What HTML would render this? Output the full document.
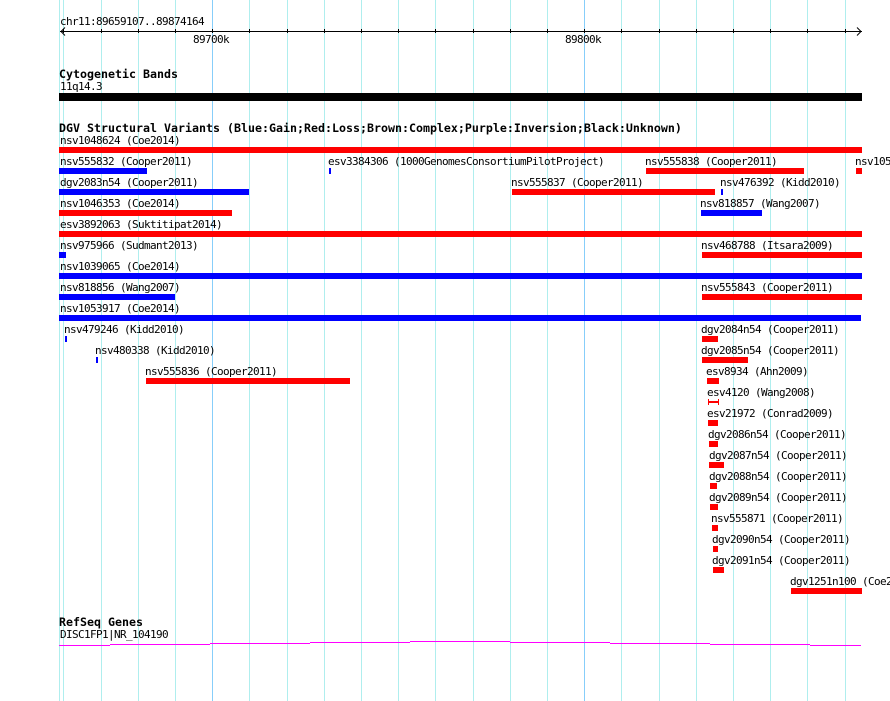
<!DOCTYPE html>
<html><head><meta charset="utf-8"><style>
html,body{margin:0;padding:0;background:#fff;width:890px;height:701px;overflow:hidden}
svg{display:block}
text{font-family:"DejaVu Sans Mono","Liberation Mono",monospace;font-size:11px;letter-spacing:-0.622px;fill:#000;white-space:pre}
text.b{font-weight:bold;font-size:11.63px;letter-spacing:0}
.g{fill:#afeeee}.d{fill:#87cefa}.r{fill:#f00}.u{fill:#00f}.m{fill:#f0f}.k{fill:#000}
</style></head><body>
<svg xmlns="http://www.w3.org/2000/svg" width="890" height="701" viewBox="0 0 890 701" shape-rendering="crispEdges">
<rect class="g" x="59" y="0" width="1" height="701"/><rect class="g" x="63" y="0" width="1" height="701"/><rect class="g" x="101" y="0" width="1" height="701"/><rect class="g" x="138" y="0" width="1" height="701"/><rect class="g" x="175" y="0" width="1" height="701"/><rect class="d" x="212" y="0" width="1" height="701"/><rect class="g" x="249" y="0" width="1" height="701"/><rect class="g" x="287" y="0" width="1" height="701"/><rect class="g" x="324" y="0" width="1" height="701"/><rect class="g" x="361" y="0" width="1" height="701"/><rect class="g" x="398" y="0" width="1" height="701"/><rect class="g" x="435" y="0" width="1" height="701"/><rect class="g" x="473" y="0" width="1" height="701"/><rect class="g" x="510" y="0" width="1" height="701"/><rect class="g" x="547" y="0" width="1" height="701"/><rect class="d" x="584" y="0" width="1" height="701"/><rect class="g" x="621" y="0" width="1" height="701"/><rect class="g" x="659" y="0" width="1" height="701"/><rect class="g" x="696" y="0" width="1" height="701"/><rect class="g" x="733" y="0" width="1" height="701"/><rect class="g" x="770" y="0" width="1" height="701"/><rect class="g" x="807" y="0" width="1" height="701"/><rect class="g" x="845" y="0" width="1" height="701"/>

<text x="60" y="25">chr11:89659107..89874164</text>
<rect class="k" x="60" y="31" width="802" height="1"/>
<path d="M65 27.5L61 31.5L65 35.5M857 27.5L861 31.5L857 35.5" fill="none" stroke="#000" stroke-width="1" shape-rendering="auto"/>
<rect class="k" x="63" y="29" width="1" height="4"/><rect class="k" x="101" y="29" width="1" height="4"/><rect class="k" x="138" y="29" width="1" height="4"/><rect class="k" x="175" y="29" width="1" height="4"/><rect class="k" x="212" y="29" width="1" height="4"/><rect class="k" x="249" y="29" width="1" height="4"/><rect class="k" x="287" y="29" width="1" height="4"/><rect class="k" x="324" y="29" width="1" height="4"/><rect class="k" x="361" y="29" width="1" height="4"/><rect class="k" x="398" y="29" width="1" height="4"/><rect class="k" x="435" y="29" width="1" height="4"/><rect class="k" x="473" y="29" width="1" height="4"/><rect class="k" x="510" y="29" width="1" height="4"/><rect class="k" x="547" y="29" width="1" height="4"/><rect class="k" x="584" y="29" width="1" height="4"/><rect class="k" x="621" y="29" width="1" height="4"/><rect class="k" x="659" y="29" width="1" height="4"/><rect class="k" x="696" y="29" width="1" height="4"/><rect class="k" x="733" y="29" width="1" height="4"/><rect class="k" x="770" y="29" width="1" height="4"/><rect class="k" x="807" y="29" width="1" height="4"/><rect class="k" x="845" y="29" width="1" height="4"/>
<text x="193" y="43">89700k</text>
<text x="565" y="43">89800k</text>

<text class="b" x="59" y="78">Cytogenetic Bands</text>
<text x="60" y="90">11q14.3</text>
<rect class="k" x="59" y="93" width="803" height="8"/>

<text class="b" x="59" y="132">DGV Structural Variants (Blue:Gain;Red:Loss;Brown:Complex;Purple:Inversion;Black:Unknown)</text>

<text x="60" y="144">nsv1048624 (Coe2014)</text><rect class="r" x="59" y="147" width="803" height="6"/>

<text x="60" y="165">nsv555832 (Cooper2011)</text><rect class="u" x="59" y="168" width="88" height="6"/>
<text x="328" y="165">esv3384306 (1000GenomesConsortiumPilotProject)</text><rect class="u" x="329" y="168" width="2" height="6"/>
<text x="645" y="165">nsv555838 (Cooper2011)</text><rect class="r" x="646" y="168" width="158" height="6"/>
<text x="855" y="165">nsv105</text><rect class="r" x="856" y="168" width="6" height="6"/>

<text x="60" y="186">dgv2083n54 (Cooper2011)</text><rect class="u" x="59" y="189" width="190" height="6"/>
<text x="511" y="186">nsv555837 (Cooper2011)</text><rect class="r" x="512" y="189" width="203" height="6"/>
<text x="720" y="186">nsv476392 (Kidd2010)</text><rect class="u" x="721" y="189" width="2" height="6"/>

<text x="60" y="207">nsv1046353 (Coe2014)</text><rect class="r" x="59" y="210" width="173" height="6"/>
<text x="700" y="207">nsv818857 (Wang2007)</text><rect class="u" x="701" y="210" width="61" height="6"/>

<text x="60" y="228">esv3892063 (Suktitipat2014)</text><rect class="r" x="59" y="231" width="803" height="6"/>

<text x="60" y="249">nsv975966 (Sudmant2013)</text><rect class="u" x="59" y="252" width="7" height="6"/>
<text x="701" y="249">nsv468788 (Itsara2009)</text><rect class="r" x="702" y="252" width="160" height="6"/>

<text x="60" y="270">nsv1039065 (Coe2014)</text><rect class="u" x="59" y="273" width="803" height="6"/>

<text x="60" y="291">nsv818856 (Wang2007)</text><rect class="u" x="59" y="294" width="116" height="6"/>
<text x="701" y="291">nsv555843 (Cooper2011)</text><rect class="r" x="702" y="294" width="160" height="6"/>

<text x="60" y="312">nsv1053917 (Coe2014)</text><rect class="u" x="59" y="315" width="802" height="6"/>

<text x="64" y="333">nsv479246 (Kidd2010)</text><rect class="u" x="65" y="336" width="2" height="6"/>
<text x="701" y="333">dgv2084n54 (Cooper2011)</text><rect class="r" x="702" y="336" width="16" height="6"/>

<text x="95" y="354">nsv480338 (Kidd2010)</text><rect class="u" x="96" y="357" width="2" height="6"/>
<text x="701" y="354">dgv2085n54 (Cooper2011)</text><rect class="r" x="702" y="357" width="46" height="6"/>

<text x="145" y="375">nsv555836 (Cooper2011)</text><rect class="r" x="146" y="378" width="204" height="6"/>
<text x="706" y="375">esv8934 (Ahn2009)</text><rect class="r" x="707" y="378" width="12" height="6"/>

<text x="707" y="396">esv4120 (Wang2008)</text><rect class="r" x="708" y="399" width="1" height="6"/><rect class="r" x="718" y="399" width="1" height="6"/><rect class="r" x="708" y="401" width="11" height="2"/>

<text x="707" y="417">esv21972 (Conrad2009)</text><rect class="r" x="708" y="420" width="10" height="6"/>

<text x="708" y="438">dgv2086n54 (Cooper2011)</text><rect class="r" x="709" y="441" width="9" height="6"/>
<text x="709" y="459">dgv2087n54 (Cooper2011)</text><rect class="r" x="709" y="462" width="15" height="6"/>
<text x="709" y="480">dgv2088n54 (Cooper2011)</text><rect class="r" x="710" y="483" width="7" height="6"/>
<text x="709" y="501">dgv2089n54 (Cooper2011)</text><rect class="r" x="710" y="504" width="8" height="6"/>
<text x="711" y="522">nsv555871 (Cooper2011)</text><rect class="r" x="712" y="525" width="6" height="6"/>
<text x="712" y="543">dgv2090n54 (Cooper2011)</text><rect class="r" x="713" y="546" width="5" height="6"/>
<text x="712" y="564">dgv2091n54 (Cooper2011)</text><rect class="r" x="713" y="567" width="11" height="6"/>
<text x="790" y="585">dgv1251n100 (Coe2014)</text><rect class="r" x="791" y="588" width="71" height="6"/>

<text class="b" x="59" y="626">RefSeq Genes</text>
<text x="60" y="638">DISC1FP1|NR_104190</text>
<rect class="m" x="59" y="645" width="51" height="1"/><rect class="m" x="110" y="644" width="100" height="1"/><rect class="m" x="210" y="643" width="100" height="1"/><rect class="m" x="310" y="642" width="100" height="1"/><rect class="m" x="410" y="641" width="100" height="1"/><rect class="m" x="510" y="642" width="100" height="1"/><rect class="m" x="610" y="643" width="100" height="1"/><rect class="m" x="710" y="644" width="100" height="1"/><rect class="m" x="810" y="645" width="51" height="1"/>
</svg>
</body></html>
